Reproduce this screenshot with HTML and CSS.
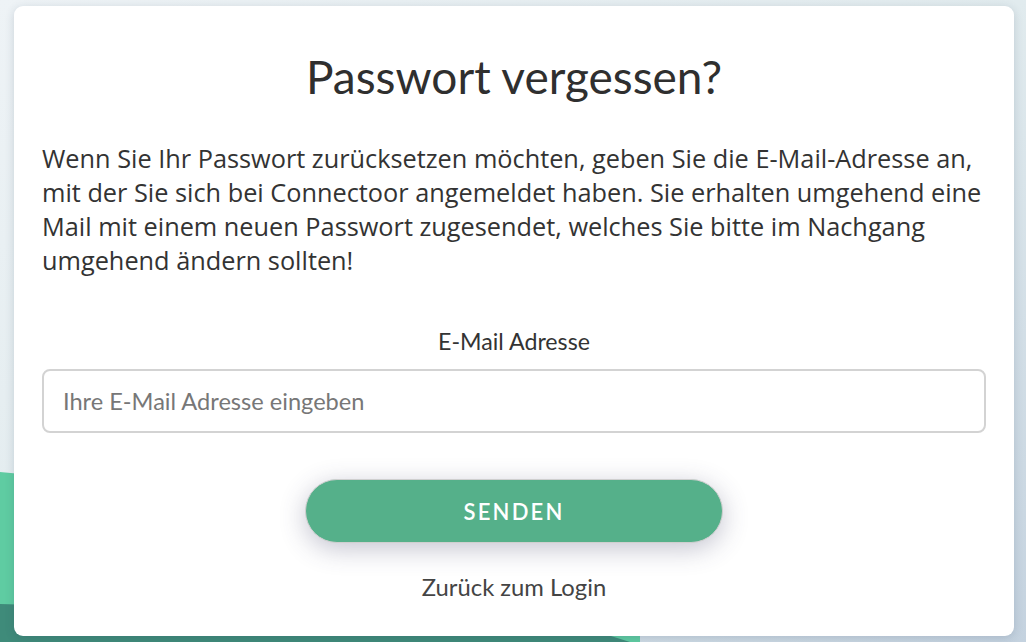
FILE: index.html
```html
<!DOCTYPE html>
<html lang="de">
<head>
<meta charset="utf-8">
<title>Passwort vergessen?</title>
<link rel="stylesheet" href="styles.css">
</head>
<body>
<div class="backdrop" aria-hidden="true">
  <svg width="1026" height="642" viewBox="0 0 1026 642" preserveAspectRatio="none">
    <defs>
      <linearGradient id="bg" x1="0" y1="0" x2="1" y2="1">
        <stop offset="0" stop-color="#eef3f6"/>
        <stop offset="0.5" stop-color="#e1ebee"/>
        <stop offset="1" stop-color="#c4d2df"/>
      </linearGradient>
    </defs>
    <rect width="1026" height="642" fill="url(#bg)"/>
    <path d="M0 472 L300 500 L640 560 L640 642 L0 642 Z" fill="#5fcca2"/>
    <path d="M0 604 L560 620 L630 642 L0 642 Z" fill="#3f8b7a"/>
  </svg>
</div>
<main class="card">
  <h1 class="title">Passwort vergessen?</h1>
  <p class="intro">Wenn Sie Ihr Passwort zurücksetzen möchten, geben Sie die E-Mail-Adresse an, mit der Sie sich bei Connectoor angemeldet haben. Sie erhalten umgehend eine Mail mit einem neuen Passwort zugesendet, welches Sie bitte im Nachgang umgehend ändern sollten!</p>
  <form class="form">
    <label class="label" for="email">E-Mail Adresse</label>
    <input class="input" id="email" type="email" placeholder="Ihre E-Mail Adresse eingeben">
    <button class="button" type="button">SENDEN</button>
    <a class="back" href="#">Zurück zum Login</a>
  </form>
</main>
</body>
</html>
```

FILE: styles.css
```css
html, body {
  margin: 0;
  padding: 0;
  width: 1026px;
  height: 642px;
  overflow: hidden;
}

body {
  position: relative;
  font-family: "Lato", "Open Sans", sans-serif;
  color: #333;
  padding: 6px 12px 6px 14px;
  box-sizing: border-box;
}

.backdrop {
  position: absolute;
  inset: 0;
  z-index: 0;
}

.backdrop svg {
  display: block;
}

.card {
  position: relative;
  z-index: 1;
  width: 1000px;
  height: 630px;
  box-sizing: border-box;
  background: #fff;
  border-radius: 9px;
  box-shadow: 0 2px 10px rgba(40, 60, 90, 0.18);
  padding: 46px 28px 0 28px;
  display: flex;
  flex-direction: column;
}

.title {
  margin: 0;
  text-align: center;
  font-family: "Lato", sans-serif;
  font-weight: 400;
  font-size: 46px;
  line-height: 50px;
  color: #2f2f2f;
}

.intro {
  margin: 39px -16px 0 0;
  font-family: "Open Sans", sans-serif;
  font-size: 25.3px;
  line-height: 34px;
  color: #333;
}

.form {
  display: flex;
  flex-direction: column;
  align-items: center;
  margin-top: 50px;
}

.label {
  font-size: 23.2px;
  line-height: 28px;
  color: #333;
}

.input {
  margin-top: 14px;
  width: 100%;
  height: 64px;
  box-sizing: border-box;
  border: 2px solid #d3d3d3;
  border-radius: 8px;
  padding: 0 19px;
  font-family: "Lato", sans-serif;
  font-size: 23.6px;
  color: #333;
  outline: none;
}

.input::placeholder {
  color: #777;
}

.button {
  margin-top: 46px;
  width: 418px;
  height: 64px;
  border-radius: 32px;
  border: 1px solid #cfcfcf;
  background: #55b08a;
  color: #fff;
  font-family: "Lato", sans-serif;
  font-size: 22px;
  font-weight: 600;
  letter-spacing: 2.2px;
  box-shadow: 0 6px 26px rgba(60, 60, 100, 0.3);
  cursor: pointer;
}

.back {
  margin-top: 30px;
  font-size: 23.8px;
  line-height: 28px;
  color: #444;
  text-decoration: none;
}
```
